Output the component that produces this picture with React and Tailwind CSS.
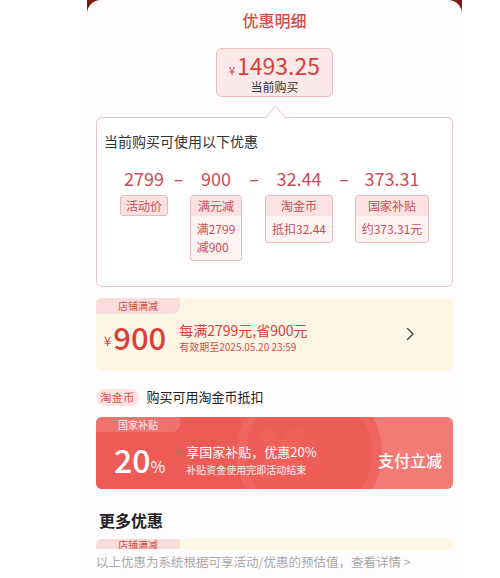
import React from 'react'

const font = { fontFamily: '"Noto Sans CJK SC", "Noto Sans", sans-serif' }

// column layout of the formula row
const parts = [
  { w: 'w-[48px]', num: '2799', title: '活动价' },
  { dash: true, w: 'w-[21px]' },
  { w: 'w-[54px]', num: '900', title: '满元减', body: ['满2799', '减900'], left: true },
  { dash: true, w: 'w-[22px]' },
  { w: 'w-[68px]', num: '32.44', title: '淘金币', body: ['抵扣32.44'] },
  { dash: true, w: 'w-[22px]' },
  { w: 'w-[74px]', num: '373.31', title: '国家补贴', body: ['约373.31元'] },
]

function Tag({ title, body, left }) {
  if (!body) {
    return (
      <div className="rounded-[3px] border border-[#e6b9bd] bg-[#fbe0e0] px-[5px] text-[12px] leading-[19px] text-[#c9505a]">
        {title}
      </div>
    )
  }
  return (
    <div className="overflow-hidden rounded-[3px] border border-[#e6b9bd] bg-[#fdf3f3] text-[12px] text-[#c9505a]">
      <div className="bg-[#fbe1e1] text-center leading-[20px]">{title}</div>
      <div className={`px-[6px] py-[4px] leading-[18px] whitespace-nowrap ${left ? 'text-left' : 'text-center'}`}>
        {body.map((b) => (
          <div key={b}>{b}</div>
        ))}
      </div>
    </div>
  )
}

function Chevron() {
  return (
    <svg width="9" height="14" viewBox="0 0 9 14" fill="none">
      <path d="M1.5 1.5 L7 7 L1.5 12.5" stroke="#555" strokeWidth="1.6" strokeLinecap="round" strokeLinejoin="round" />
    </svg>
  )
}

export default function App() {
  return (
    <div className="h-[578px] w-[500px] overflow-hidden bg-white pl-[87px]" style={font}>
      <div className="h-full w-[375px] bg-[#7b1c14]">
        <div className="h-full rounded-t-[14px] bg-[#fefcfc] pl-[9px] pr-[9px] pt-[8px]">
          {/* header */}
          <div className="text-center text-[16px] font-medium leading-[24px] text-[#d0504a]">优惠明细</div>

          <div className="mt-[16px] flex justify-center">
            <div className="flex h-[49px] w-[117px] flex-col items-center rounded-[6px] border border-[#e8bcbc] bg-[#fbe9e9] pt-[2px]">
              <div className="flex h-[28px] items-baseline text-[#d9403c]">
                <span className="mr-[2px] text-[11px]">¥</span>
                <span className="text-[23px] leading-[28px]">1493.25</span>
              </div>
              <div className="text-[12px] leading-[16px] text-[#333]">当前购买</div>
            </div>
          </div>

          {/* breakdown card */}
          <div className="relative mt-[20px] h-[170px] rounded-[6px] border border-[#e6c4c4] bg-white pl-[7px] pt-[13px]">
            <svg className="absolute left-[168px] top-[-13px]" width="21" height="14" viewBox="0 0 21 14">
              <path d="M0 13.5 L10.5 1 L21 13.5" fill="white" stroke="#e6c4c4" strokeWidth="1" />
              <rect x="1" y="13" width="19" height="2" fill="white" />
            </svg>
            <div className="text-[14px] leading-[20px] text-[#333]">当前购买可使用以下优惠</div>
            <div className="ml-[16px] mt-[15px] flex">
              {parts.map((p, i) =>
                p.dash ? (
                  <div key={i} className={`${p.w} text-center text-[18px] leading-[24px] text-[#c94c55]`}>–</div>
                ) : (
                  <div key={i} className={`${p.w} flex flex-col items-center`}>
                    <div className="whitespace-nowrap text-[18px] leading-[24px] text-[#c94c55]">{p.num}</div>
                    <div className="mt-[5px]">
                      <Tag title={p.title} body={p.body} left={p.left} />
                    </div>
                  </div>
                )
              )}
            </div>
          </div>

          {/* store coupon */}
          <div className="mt-[11px] h-[73px] overflow-hidden rounded-[6px] bg-[#fdf6e4]">
            <div className="h-[16px] w-[84px] rounded-br-[8px] bg-[#f9dcdc] text-center text-[10px] leading-[16px] text-[#d0504a]">店铺满减</div>
            <div className="mt-[6px] flex items-center pl-[8px] pr-[38px]">
              <span className="mt-[8px] text-[13px] text-[#d9403c]">¥</span>
              <span className="ml-[2px] text-[31px] font-medium leading-[34px] text-[#d9403c]">900</span>
              <div className="ml-[13px] flex-1">
                <div className="text-[14px] leading-[18px] text-[#d9403c]">每满2799元,省900元</div>
                <div className="text-[10px] leading-[15px] text-[#d0504a]">有效期至2025.05.20 23:59</div>
              </div>
              <div className="mt-[-6px]">
                <Chevron />
              </div>
            </div>
          </div>

          {/* coin row */}
          <div className="mt-[16px] flex h-[20px] items-center">
            <div className="rounded-[8px] bg-[#fde5e5] px-[4px] text-[11.5px] leading-[17px] text-[#e0504a]">淘金币</div>
            <div className="ml-[8px] text-[13px] text-[#222]">购买可用淘金币抵扣</div>
          </div>

          {/* subsidy card */}
          <div className="relative mt-[10px] h-[72px] overflow-hidden rounded-[6px] bg-[#f27b75]">
            <div className="absolute left-0 top-0 h-full w-[210px] bg-[#ee5a55]" />
            <div className="absolute left-[140px] top-[-37px] h-[146px] w-[146px] rounded-full bg-[#ef6660]" />
            <div className="absolute left-[150px] top-[-27px] h-[126px] w-[126px] rounded-full bg-[#ee5d57]" />
            <div className="absolute left-[178px] top-[4px] h-[64px] w-[16px] -rotate-[40deg] rounded-full bg-[#ef625c]" />
            <div className="absolute left-[178px] top-[4px] h-[64px] w-[16px] rotate-[40deg] rounded-full bg-[#ef625c]" />
            <div className="relative h-[15px] w-[84px] rounded-br-[8px] bg-white/15 text-center text-[10px] leading-[15px] text-white/90">国家补贴</div>
            <div className="relative flex items-center pl-[18px] pr-[11px] pt-[9px]">
              <div className="flex items-baseline text-white">
                <span className="text-[32px] font-medium leading-[36px]">20</span>
                <span className="text-[16px]">%</span>
              </div>
              <div className="ml-[21px] flex-1 text-white">
                <div className="text-[13px] leading-[18px]">享国家补贴，优惠20%</div>
                <div className="mt-[1px] text-[10px] leading-[15px] text-white/90">补贴资金使用完即活动结束</div>
              </div>
              <div className="text-[16px] font-medium text-white">支付立减</div>
            </div>
          </div>

          {/* more */}
          <div className="mt-[19px] pl-[3px] text-[16px] font-bold leading-[24px] text-[#222]">更多优惠</div>
          <div className="mt-[7px] h-[10px] overflow-hidden rounded-t-[6px] bg-[#fdf8e6]">
            <div className="h-[16px] w-[84px] bg-[#f9dcdc] pl-[22px] text-[10px] leading-[12px] text-[#d0504a]">店铺满减</div>
          </div>
          <div className="mt-[4px] whitespace-nowrap text-[12.5px] leading-[18px] text-[#a9a9a9]">
            以上优惠为系统根据可享活动/优惠的预估值，查看详情 &gt;
          </div>
        </div>
      </div>
    </div>
  )
}
